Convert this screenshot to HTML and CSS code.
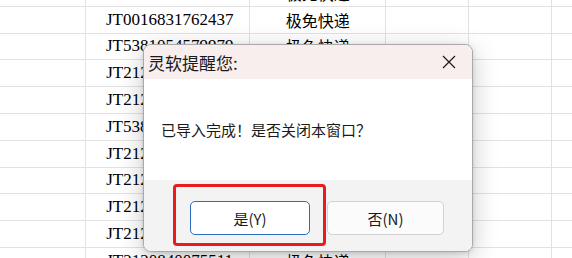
FILE: index.html
```html
<!DOCTYPE html>
<html lang="zh-CN">
<head>
<meta charset="utf-8">
<link rel="stylesheet" href="styles.css">
<title>灵软提醒您</title>
</head>
<body>
<div class="viewport">
<div class="sheet">
  <div class="row"><div class="c c0"></div><div class="c c1">JT2120210075511</div><div class="c c2">极免快递</div><div class="c c3"></div><div class="c c4"></div><div class="c c5"></div></div>
  <div class="row"><div class="c c0"></div><div class="c c1">JT0016831762437</div><div class="c c2">极免快递</div><div class="c c3"></div><div class="c c4"></div><div class="c c5"></div></div>
  <div class="row"><div class="c c0"></div><div class="c c1">JT5381054579979</div><div class="c c2">极免快递</div><div class="c c3"></div><div class="c c4"></div><div class="c c5"></div></div>
  <div class="row"><div class="c c0"></div><div class="c c1">JT2120210075511</div><div class="c c2">极免快递</div><div class="c c3"></div><div class="c c4"></div><div class="c c5"></div></div>
  <div class="row"><div class="c c0"></div><div class="c c1">JT2120210075511</div><div class="c c2">极免快递</div><div class="c c3"></div><div class="c c4"></div><div class="c c5"></div></div>
  <div class="row"><div class="c c0"></div><div class="c c1">JT5381054579979</div><div class="c c2">极免快递</div><div class="c c3"></div><div class="c c4"></div><div class="c c5"></div></div>
  <div class="row"><div class="c c0"></div><div class="c c1">JT2120210075511</div><div class="c c2">极免快递</div><div class="c c3"></div><div class="c c4"></div><div class="c c5"></div></div>
  <div class="row"><div class="c c0"></div><div class="c c1">JT2120210075511</div><div class="c c2">极免快递</div><div class="c c3"></div><div class="c c4"></div><div class="c c5"></div></div>
  <div class="row"><div class="c c0"></div><div class="c c1">JT2120210075511</div><div class="c c2">极免快递</div><div class="c c3"></div><div class="c c4"></div><div class="c c5"></div></div>
  <div class="row"><div class="c c0"></div><div class="c c1">JT2120210075511</div><div class="c c2">极免快递</div><div class="c c3"></div><div class="c c4"></div><div class="c c5"></div></div>
  <div class="row"><div class="c c0"></div><div class="c c1">JT2120840075511</div><div class="c c2">极免快递</div><div class="c c3"></div><div class="c c4"></div><div class="c c5"></div></div>
</div>
</div>

<div class="dialog">
  <div class="titlebar">
    <span class="title">灵软提醒您:</span>
    <svg class="close" width="14" height="14" viewBox="0 0 14 14"><path d="M1 1 L13 13 M13 1 L1 13" stroke="#1a1a1a" stroke-width="1.2" fill="none"/></svg>
  </div>
  <div class="body">
    <p class="msg">已导入完成！是否关闭本窗口？</p>
  </div>
  <div class="footer">
    <button class="btn btn-primary">是(Y)</button>
    <button class="btn">否(N)</button>
  </div>
  <div class="highlight"></div>
</div>
</body>
</html>
```

FILE: styles.css
```css
html, body {
  margin: 0;
  padding: 0;
  background: #ffffff;
  overflow: hidden;
}
body {
  width: 572px;
  height: 258px;
  position: relative;
}
.viewport {
  height: 258px;
  overflow: hidden;
}
.sheet {
  margin-top: -20px;
  display: flex;
  flex-direction: column;
}
.row {
  display: flex;
  height: 26.8px;
}
.c {
  box-sizing: border-box;
  border-right: 1px solid #e2e2e2;
  border-bottom: 1px solid #e2e2e2;
  display: flex;
  align-items: center;
  justify-content: center;
  color: #000;
  white-space: nowrap;
  overflow: hidden;
}
.c0 { width: 88px; }
.c1 { width: 168px; font-family: "Liberation Serif", "Noto Sans CJK SC", serif; font-size: 17px; padding-left: 4px; }
.c2 { width: 139px; font-family: "Noto Sans CJK SC", sans-serif; font-size: 16px; }
.c3 { width: 85px; }
.c4 { width: 85px; }
.c5 { width: 20px; border-right: none; }

.dialog {
  position: absolute;
  left: 143px;
  top: 44px;
  width: 330px;
  height: 208px;
  box-sizing: border-box;
  border: 1px solid #a9a9a9;
  border-radius: 8px;
  background: #ffffff;
  box-shadow: 0 6px 26px rgba(0, 0, 0, 0.22), 0 1px 4px rgba(0, 0, 0, 0.12);
  display: flex;
  flex-direction: column;
  font-family: "Noto Sans CJK SC", sans-serif;
}
.titlebar {
  height: 34px;
  background: #f8eeee;
  border-radius: 7px 7px 0 0;
  display: flex;
  align-items: center;
  justify-content: space-between;
  padding: 0 16px 0 4px;
}
.title {
  font-size: 17px;
  color: #1a1a1a;
}
.close {
  display: block;
  margin-top: -1px;
}
.body {
  height: 101px;
  display: flex;
  align-items: center;
  padding-left: 17px;
}
.msg {
  margin: 0;
  font-size: 15px;
  color: #1a1a1a;
}
.footer {
  flex: 1;
  background: #f3f3f3;
  border-radius: 0 0 7px 7px;
  display: flex;
  align-items: flex-start;
  padding: 21px 0 0 46px;
  gap: 17px;
}
.btn {
  box-sizing: border-box;
  height: 34px;
  width: 120px;
  border: 1px solid #d2d2d2;
  border-radius: 5px;
  background: #fbfbfb;
  font-family: "Noto Sans CJK SC", sans-serif;
  font-size: 15px;
  color: #1a1a1a;
  padding: 0;
}
.btn + .btn { width: 117px; }
.btn-primary {
  border-color: #2a6cc0;
  background: #ffffff;
}
.highlight {
  position: absolute;
  left: 29px;
  top: 139px;
  width: 153px;
  height: 62px;
  box-sizing: border-box;
  border: 3px solid #e81b1f;
  border-radius: 4px;
}
```
